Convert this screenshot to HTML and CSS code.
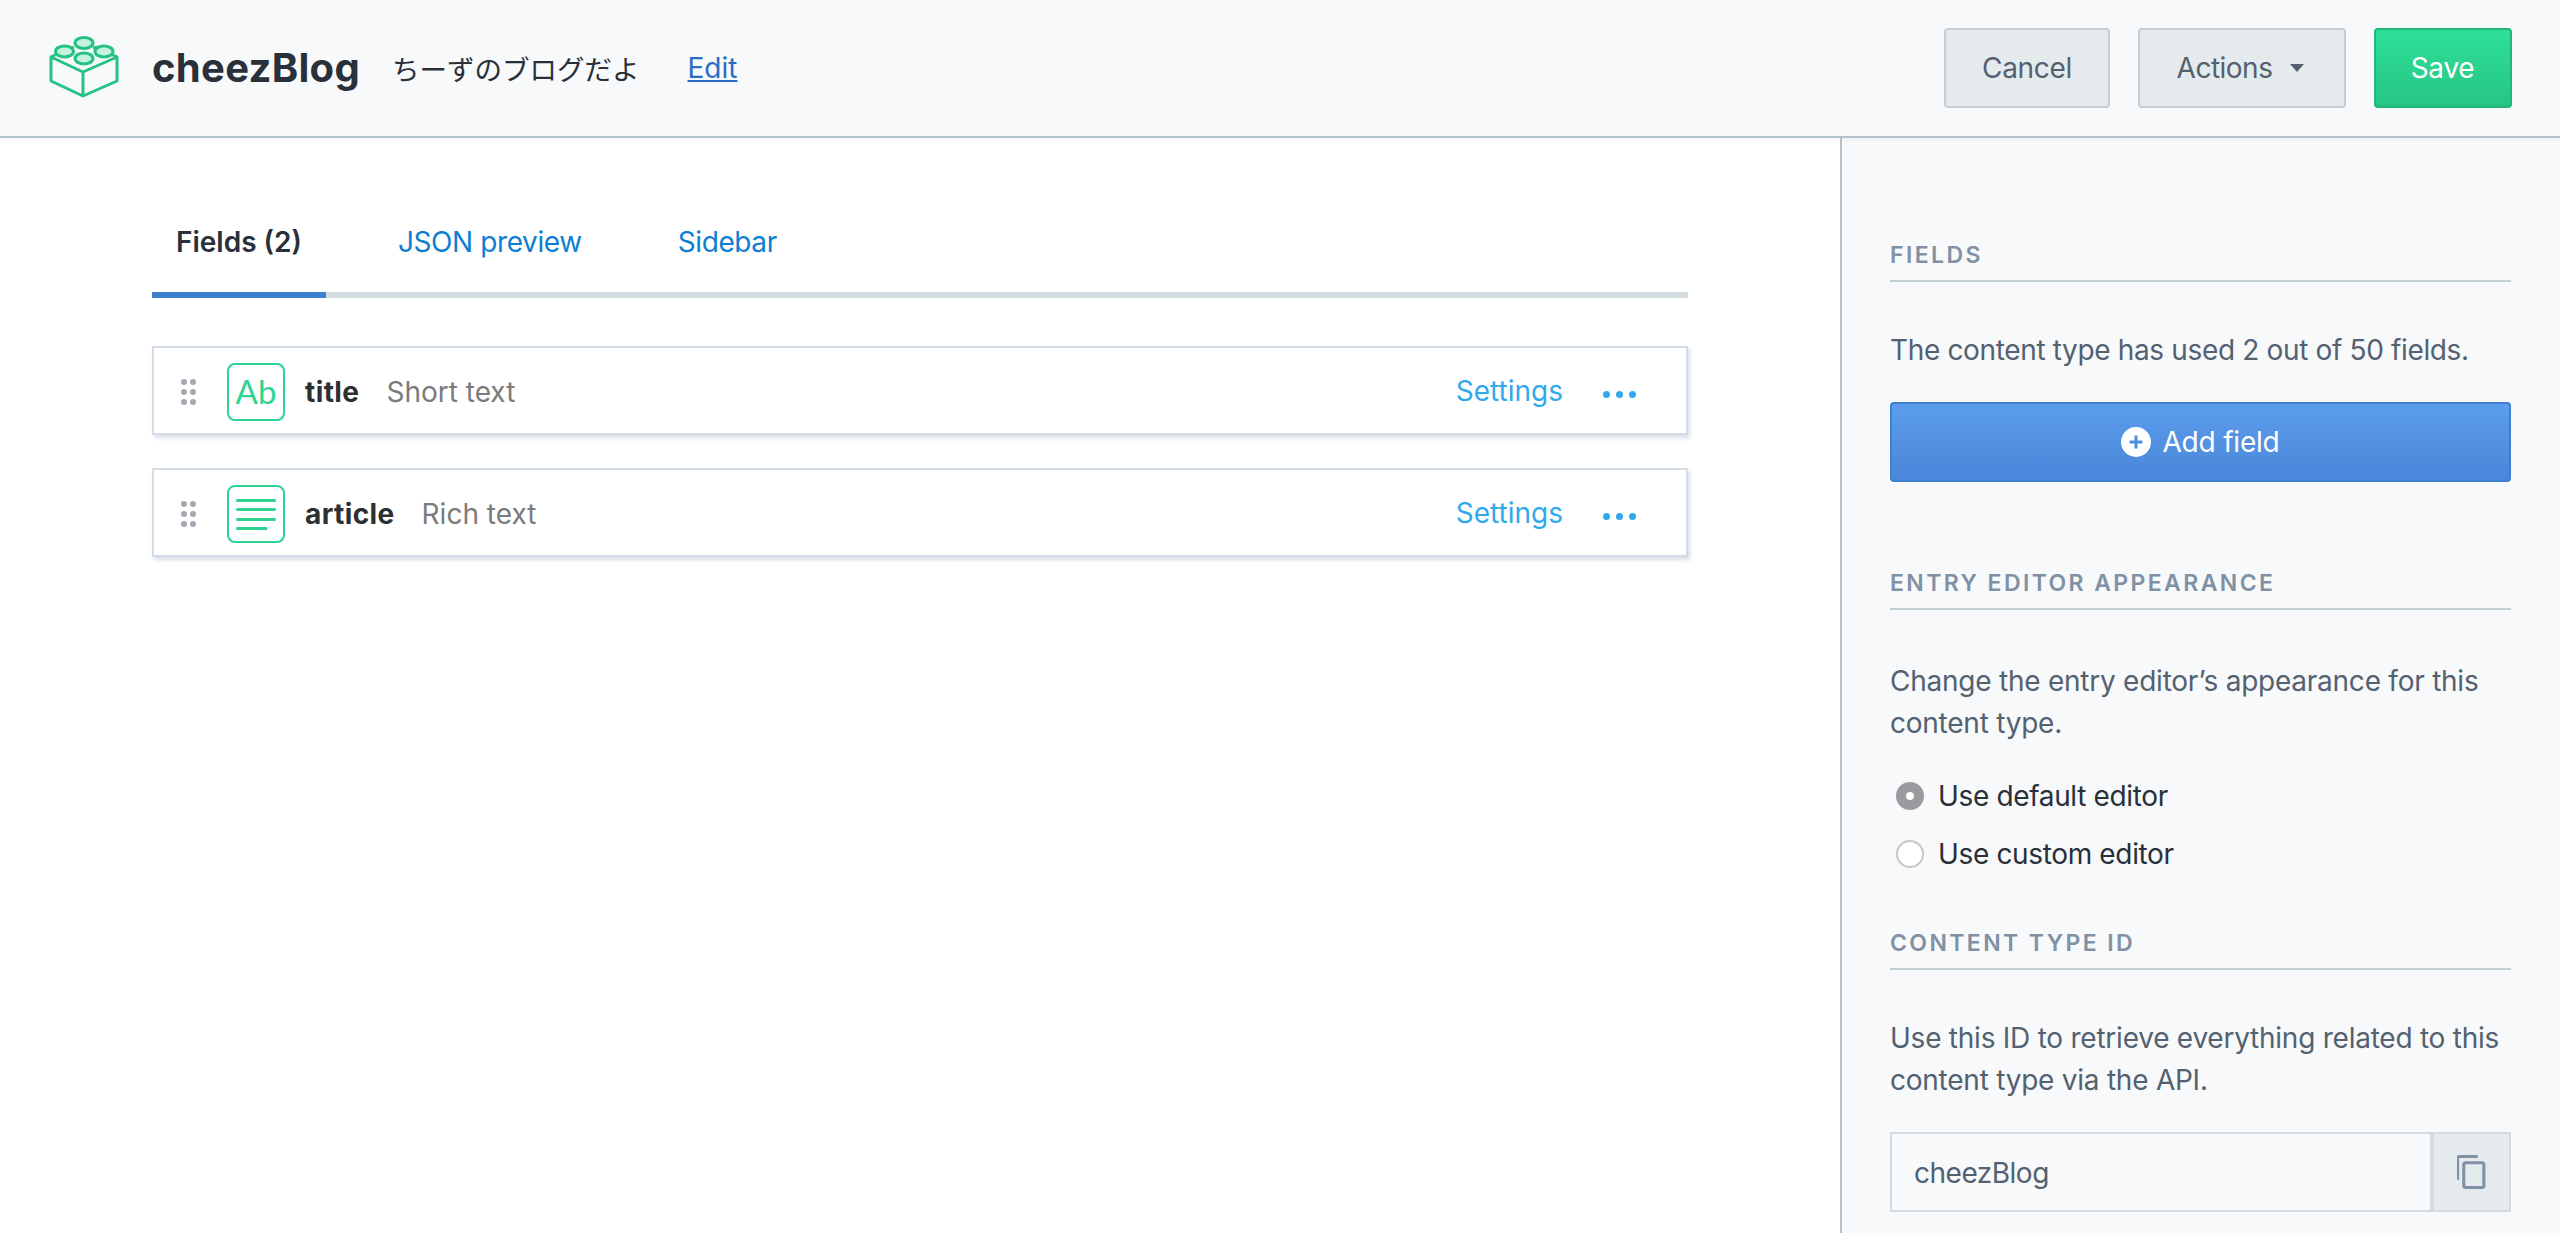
FILE: index.html
```html
<!DOCTYPE html>
<html lang="en">
<head>
<meta charset="utf-8">
<title>cheezBlog</title>
<link rel="stylesheet" href="styles.css">
</head>
<body>
<div class="app">
  <header class="topbar">
    <div class="brand">
      <svg class="logo" viewBox="0 0 72 64" fill="none" stroke="#25c283" stroke-width="3" stroke-linejoin="round">
        <path d="M3 22 L35 37 L69 22 V46 L35 61 L3 46 Z M35 37 V61"/>
        <path d="M3 22 L11 18 M69 22 L61 18 M26 13 L20 12 M45 13 L50 12"/>
        <g fill="#c5f2de">
          <ellipse cx="36" cy="8" rx="9" ry="5.500"/>
          <ellipse cx="16.500" cy="16.500" rx="9" ry="5.500"/>
          <ellipse cx="56" cy="16.500" rx="9" ry="5.500"/>
          <ellipse cx="36" cy="23.500" rx="9" ry="5.500"/>
        </g>
      </svg>
      <h1 class="brand-name">cheezBlog</h1>
      <span class="brand-desc">ちーずのブログだよ</span>
      <a class="brand-edit" href="#">Edit</a>
    </div>
    <div class="actions">
      <button class="btn btn-muted btn-cancel">Cancel</button>
      <button class="btn btn-muted btn-actions">Actions<span class="caret"></span></button>
      <button class="btn btn-save">Save</button>
    </div>
  </header>
  <div class="body">
    <main class="content">
      <nav class="tabs">
        <a class="tab tab-active" href="#">Fields (2)</a>
        <a class="tab" href="#">JSON preview</a>
        <a class="tab" href="#">Sidebar</a>
      </nav>
      <ul class="fields">
        <li class="field">
          <span class="drag"><i></i><i></i><i></i><i></i><i></i><i></i></span>
          <span class="type-icon"><span class="ab">Ab</span></span>
          <span class="field-name">title</span>
          <span class="field-type">Short text</span>
          <a class="field-settings" href="#">Settings</a>
          <span class="more"><i></i><i></i><i></i></span>
        </li>
        <li class="field">
          <span class="drag"><i></i><i></i><i></i><i></i><i></i><i></i></span>
          <span class="type-icon">
            <svg class="lines" viewBox="0 0 40 32" fill="none" stroke="#2ed391" stroke-width="3" stroke-linecap="round">
              <path d="M1.500 2.500 H38.500 M1.500 11.500 H38.500 M1.500 21.500 H38.500 M1.500 30.500 H30"/>
            </svg>
          </span>
          <span class="field-name">article</span>
          <span class="field-type">Rich text</span>
          <a class="field-settings" href="#">Settings</a>
          <span class="more"><i></i><i></i><i></i></span>
        </li>
      </ul>
    </main>
    <aside class="sidebar">
      <h2 class="side-head side-head-first">Fields</h2>
      <p class="side-text side-text-one">The content type has used 2 out of 50 fields.</p>
      <button class="btn-add">
        <svg class="plus" viewBox="0 0 30 30"><circle cx="15" cy="15" r="15" fill="#fff"/><path d="M15 8.500 V21.500 M8.500 15 H21.500" stroke="#4f8fe0" stroke-width="3"/></svg>
        Add field
      </button>
      <h2 class="side-head side-head-entry">Entry editor appearance</h2>
      <p class="side-text side-text-entry">Change the entry editor’s appearance for this content type.</p>
      <div class="radios">
        <label class="radio-row"><span class="radio radio-on"></span>Use default editor</label>
        <label class="radio-row"><span class="radio"></span>Use custom editor</label>
      </div>
      <h2 class="side-head side-head-id">Content type ID</h2>
      <p class="side-text side-text-id">Use this ID to retrieve everything related to this content type via the API.</p>
      <div class="copy-field">
        <span class="copy-value">cheezBlog</span>
        <button class="copy-btn">
          <svg class="copy-icon" viewBox="3 1 18 22" fill="#8091a5"><path d="M16 1H4c-1.100 0-2 .9-2 2v14h2V3h12V1zm3 4H8c-1.100 0-2 .9-2 2v14c0 1.100.9 2 2 2h11c1.100 0 2-.9 2-2V7c0-1.100-.9-2-2-2zm0 16H8V7h11v14z"/></svg>
        </button>
      </div>
    </aside>
  </div>
</div>
</body>
</html>
```
FILE: styles.css
```css
* { box-sizing: border-box; }
html, body { margin: 0; height: 100%; overflow: hidden; background: #fff; }
body { font-family: Inter, "Noto Sans CJK JP", sans-serif; font-size: 28px; color: #536171; }
.app { height: 1233px; display: flex; flex-direction: column; }
a { text-decoration: none; }

.topbar {
  height: 138px; flex: none; display: flex; align-items: center; justify-content: space-between;
  padding: 0 48px; background: #f7f9fa; border-bottom: 2px solid #b4c3ca;
  box-shadow: 0 2px 4px rgba(12, 20, 28, .05); position: relative;
}
.brand { display: flex; align-items: center; }
.logo { width: 72px; height: 64px; margin-top: -2px; flex: none; }
.brand-name { margin: 0 0 0 32px; font-size: 40px; font-weight: 700; line-height: 48px; color: #2a3039; letter-spacing: 0.3px; }
.brand-desc { margin-left: 32px; font-size: 27.500px; color: #2a3039; font-family: "Noto Sans CJK JP", sans-serif; font-weight: 400; }
.brand-edit { margin-left: 48px; font-size: 28px; color: #2a6cc4; text-decoration: underline; }

.actions { display: flex; gap: 28px; }
.btn {
  height: 80px; border-radius: 4px; font: inherit; font-size: 28px; letter-spacing: -0.3px; display: flex; align-items: center; justify-content: center;
  border: 2px solid #c3cfd5; padding: 0;
}
.btn-muted { background: #e5ebed; color: #536171; }
.btn-cancel { width: 166px; }
.btn-actions { width: 208px; letter-spacing: -0.5px; padding-right: 3px; }
.caret { width: 0; height: 0; margin-left: 18px; border: 7px solid transparent; border-top: 8px solid #536171; border-bottom: 0; }
.btn-save { width: 138px; color: #fff; border-color: #21b67a; background: linear-gradient(#2ee097, #26c585); padding-right: 1px; }

.body { flex: 1; display: flex; min-height: 0; }
.content { flex: 1; padding: 0 152px; min-width: 0; }
.tabs { display: flex; gap: 48px; height: 160px; padding-top: 78px; border-bottom: 6px solid #d3dce0; width: 1536px; }
.tab { padding: 0 24px; height: 82px; line-height: 52px; color: #0d7ed1; font-weight: 400; letter-spacing: -0.4px; }
.tab-active { color: #2a3039; font-weight: 600; letter-spacing: 0; border-bottom: 6px solid #3c80cf; }

.fields { list-style: none; margin: 48px 0 0; padding: 0; width: 1536px; display: flex; flex-direction: column; gap: 33px; }
.field {
  height: 89px; display: flex; align-items: center; padding: 0 50px 0 27px; background: #fff;
  border: 2px solid #d3dce6; box-shadow: 2px 3px 4px rgba(130, 150, 175, .3);
}
.drag { width: 15px; display: grid; grid-template-columns: 5px 5px; gap: 4px; flex: none; margin-top: 3px; }
.drag i { width: 6px; height: 6px; border-radius: 50%; background: #a3a9b3; }
.type-icon {
  width: 58px; height: 58px; margin: 2px 0 0 31px; border: 2px solid #2ed391; border-radius: 8px; flex: none;
  display: flex; align-items: center; justify-content: center;
}
.ab { font-family: Lato, sans-serif; font-size: 33px; color: #2ed391; line-height: 1; }
.lines { width: 40px; height: 32px; }
.field-name { margin: 2px 0 0 20px; font-weight: 700; color: #2d2f31; letter-spacing: 0.4px; }
.field-type { margin: 2px 0 0 27px; color: #7b7b7b; }
.field-settings { margin-left: auto; color: #2fa9ec; }
.more { margin-left: 40px; display: flex; gap: 6px; margin-top: 7px; }
.more i { width: 7px; height: 7px; border-radius: 50%; background: #2fa9ec; }

.sidebar { width: 720px; flex: none; background: #f7f9fa; border-left: 2px solid #b4c3ca; padding: 0 49px 0 48px; letter-spacing: -0.35px; }
.side-head {
  margin: 0; height: 41px; font-size: 23px; font-weight: 600; line-height: 28px; text-transform: uppercase; letter-spacing: 2.400px;
  color: #8091a5; border-bottom: 2px solid #c3cfd5;
}
.side-head-first { margin-top: 103px; }
.side-head-entry { margin-top: 87px; }
.side-head-id { margin-top: 57px; }
.side-text { margin: 47px 0 0; line-height: 42px; color: #536171; font-size: 28px; }
.side-text-entry { margin-top: 50px; letter-spacing: -0.24px; }
.side-text-id { letter-spacing: -0.24px; }
.side-text-one { margin-bottom: 31px; }
.btn-add {
  width: 100%; height: 80px; display: flex; align-items: center; justify-content: center; gap: 11px; padding: 0;
  font: inherit; letter-spacing: -0.2px; color: #fff; border: 2px solid #3c80cf; border-radius: 4px; background: linear-gradient(#5c9ded, #4a86d9);
}
.plus { width: 30px; height: 30px; }
.radios { margin-top: 34px; padding-left: 6px; display: flex; flex-direction: column; gap: 22px; }
.radio-row { display: flex; align-items: center; gap: 14px; height: 36px; color: #2a3039; }
.radio { width: 28px; height: 28px; border-radius: 50%; background: #fff; border: 2px solid #c8c8c8; flex: none; }
.radio-on { border: 10px solid #9a9a9f; background: #fff; }
.copy-field { margin-top: 31px; height: 80px; display: flex; border: 2px solid #d3dce0; }
.copy-value { flex: 1; padding-left: 22px; line-height: 78px; letter-spacing: -0.5px; }
.copy-btn { width: 79px; padding: 0; border: 0; border-left: 4px solid #d3dce0; background: #e5ebed; display: flex; align-items: center; justify-content: center; }
.copy-icon { width: 29px; height: 34px; }
```
